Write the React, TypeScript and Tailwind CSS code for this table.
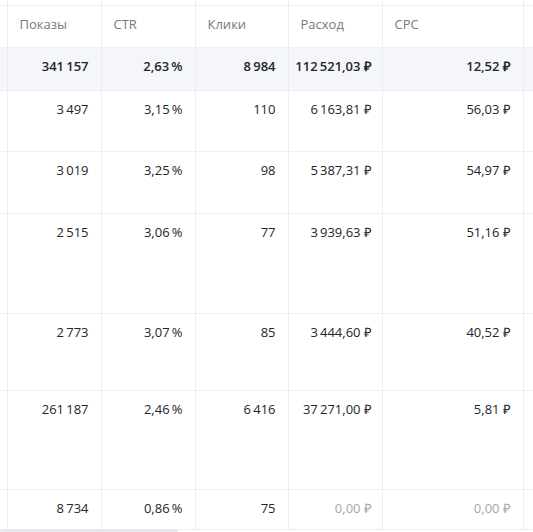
const T = "\u2009";
const R = "₽";

type Row = { h: string; cells: string[]; muted?: boolean };

const rows: Row[] = [
  { h: "h-[61px]", cells: [`3${T}497`, `3,15${T}%`, "110", `6${T}163,81${R}`, `56,03${R}`] },
  { h: "h-[62px]", cells: [`3${T}019`, `3,25${T}%`, "98", `5${T}387,31${R}`, `54,97${R}`] },
  { h: "h-[100px]", cells: [`2${T}515`, `3,06${T}%`, "77", `3${T}939,63${R}`, `51,16${R}`] },
  { h: "h-[77px]", cells: [`2${T}773`, `3,07${T}%`, "85", `3${T}444,60${R}`, `40,52${R}`] },
  { h: "h-[99px]", cells: [`261${T}187`, `2,46${T}%`, `6${T}416`, `37${T}271,00${R}`, `5,81${R}`] },
  { h: "h-[40px]", cells: [`8${T}734`, `0,86${T}%`, "75", `0,00${R}`, `0,00${R}`], muted: true },
];

const headers = ["Показы", "CTR", "Клики", "Расход", "CPC"];
const totals = [`341${T}157`, `2,63${T}%`, `8${T}984`, `112${T}521,03${R}`, `12,52${R}`];

const cell = "border-r border-b border-[#eceef1] align-top";
const pad = ["pr-3", "pr-3", "pr-3", "pr-[10px]", "pr-3"];

function Value({ v }: { v: string }) {
  if (!v.endsWith("₽")) return <>{v}</>;
  return (
    <>
      {v.slice(0, -1)}
      <span className="ml-[3px]">₽</span>
    </>
  );
}

export default function App() {
  return (
    <div
      className="relative w-[533px] h-[532px] overflow-hidden bg-white text-[13px] leading-4 text-[#22262c]"
      style={{ fontFamily: "'Open Sans', 'Liberation Sans', sans-serif" }}
    >
      <table className="table-fixed border-collapse w-[600px]">
        <colgroup>
          <col className="w-[7px]" />
          <col className="w-[94px]" />
          <col className="w-[94px]" />
          <col className="w-[93px]" />
          <col className="w-[94px]" />
          <col className="w-[141px]" />
          <col />
        </colgroup>
        <tbody>
          <tr className="h-[5px]">
            {Array.from({ length: 7 }).map((_, i) => (
              <td key={i} className={cell} />
            ))}
          </tr>
          <tr className="h-[42px]">
            <td className={cell} />
            {headers.map((h) => (
              <td key={h} className={`${cell} pl-3 pt-[10px] text-[#767a82]`}>
                {h}
              </td>
            ))}
            <td className={cell} />
          </tr>
          <tr className="h-[43px] bg-[#f4f6f9] font-semibold">
            <td className={cell} />
            {totals.map((v, i) => (
              <td key={i} className={`${cell} ${pad[i]} pt-[10px] text-right`}>
                <Value v={v} />
              </td>
            ))}
            <td className={cell} />
          </tr>
          {rows.map((r, ri) => (
            <tr key={ri} className={r.h}>
              <td className={cell} />
              {r.cells.map((v, i) => (
                <td
                  key={i}
                  className={`${cell} ${pad[i]} pt-[10px] text-right ${r.muted && i >= 3 ? "text-[#a3a7ae]" : ""}`}
                >
                  <Value v={v} />
                </td>
              ))}
              <td className={cell} />
            </tr>
          ))}
        </tbody>
      </table>
      <div className="absolute left-0 bottom-[-3px] h-[6px] w-[178px] rounded-full bg-[#e6e8ec]" />
    </div>
  );
}
